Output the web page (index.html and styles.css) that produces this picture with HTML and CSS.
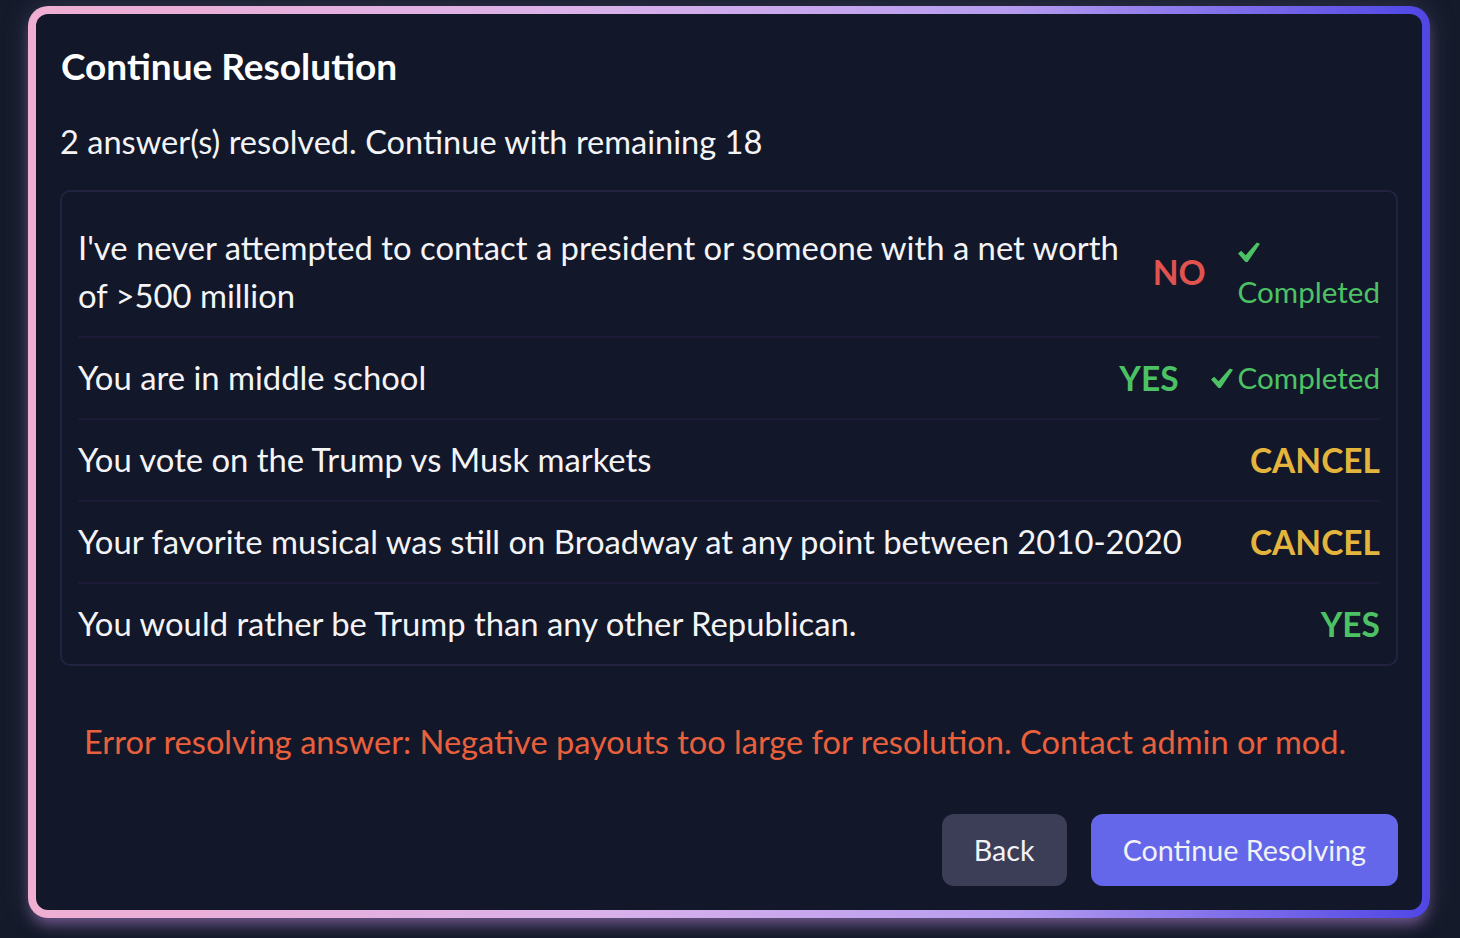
FILE: index.html
```html
<!DOCTYPE html>
<html lang="en">
<head>
<meta charset="utf-8">
<title>Continue Resolution</title>
<link rel="stylesheet" href="styles.css">
</head>
<body>
<div class="modal">
  <h2 class="title">Continue Resolution</h2>
  <p class="subtitle">2 answer(s) resolved. Continue with remaining 18</p>
  <div class="list">
    <div class="row row-tall">
      <div class="text">I've never attempted to contact a president or someone with a net worth of &gt;500 million</div>
      <div class="answer no">NO</div>
      <div class="status stacked"><span class="check"><svg viewBox="0 0 22 20" width="22" height="20" aria-hidden="true"><path d="M0 11.5 L3.2 8.8 L7.6 13.2 L18.8 0.4 L22 1.8 L9.6 20 L7.4 20 Z" fill="currentColor"/></svg></span><span>Completed</span></div>
    </div>
    <div class="row">
      <div class="text">You are in middle school</div>
      <div class="answer yes">YES</div>
      <div class="status"><span class="check"><svg viewBox="0 0 22 20" width="22" height="20" aria-hidden="true"><path d="M0 11.5 L3.2 8.8 L7.6 13.2 L18.8 0.4 L22 1.8 L9.6 20 L7.4 20 Z" fill="currentColor"/></svg></span><span>Completed</span></div>
    </div>
    <div class="row">
      <div class="text">You vote on the Trump vs Musk markets</div>
      <div class="answer cancel">CANCEL</div>
    </div>
    <div class="row">
      <div class="text">Your favorite musical was still on Broadway at any point between 2010-2020</div>
      <div class="answer cancel">CANCEL</div>
    </div>
    <div class="row">
      <div class="text">You would rather be Trump than any other Republican.</div>
      <div class="answer yes">YES</div>
    </div>
  </div>
  <p class="error">Error resolving answer: Negative payouts too large for resolution. Contact admin or mod.</p>
  <div class="actions">
    <button class="btn btn-back">Back</button>
    <button class="btn btn-primary">Continue Resolving</button>
  </div>
</div>
</body>
</html>
```
FILE: styles.css
```css
html, body {
  margin: 0;
  padding: 0;
}
body {
  background: #151a2b;
  width: 1460px;
  height: 938px;
  overflow: hidden;
  font-family: Lato, "Noto Sans", sans-serif;
  color: #f4f4f6;
  padding: 6px 30px 0 28px;
  box-sizing: border-box;
}
.modal {
  box-sizing: border-box;
  width: 1402px;
  height: 912px;
  border: 8px solid transparent;
  border-radius: 20px;
  background:
    linear-gradient(#121729, #121729) padding-box,
    linear-gradient(90deg, #f0aed2 0%, #dab2ea 40%, #b69cf0 70%, #4f46e5 100%) border-box;
  box-shadow: 0 10px 14px -4px rgba(170, 120, 200, 0.55), 0 0 24px rgba(90, 90, 120, 0.45);
  padding: 24px;
  display: flex;
  flex-direction: column;
}
.title {
  margin: 0;
  font-size: 37px;
  font-weight: 700;
  line-height: 56px;
  color: #ffffff;
  padding-left: 1px;
}
.subtitle {
  margin: 24px 0 0 0;
  font-size: 32.6px;
  line-height: 48px;
}
.list {
  margin-top: 24px;
  border: 2px solid #23233f;
  border-radius: 10px;
  padding: 0 16px;
}
.row {
  display: flex;
  align-items: center;
  gap: 32px;
  padding: 16px 0;
  border-bottom: 2px solid #1c1a36;
  font-size: 32.8px;
  line-height: 48px;
}
.row:last-child {
  border-bottom: none;
}
.row-tall {
  padding: 32px 0 16px 0;
}
.text {
  flex: 1 1 auto;
  min-width: 0;
}
.answer {
  flex: 0 0 auto;
  font-weight: 700;
  font-size: 33.5px;
}
.no { color: #e1534f; }
.yes { color: #4cc264; }
.cancel { color: #e4b53d; }
.status {
  flex: 0 0 auto;
  display: flex;
  align-items: center;
  color: #4cc264;
  font-size: 29.6px;
  line-height: 40px;
}
.status.stacked {
  flex-direction: column;
  align-items: flex-start;
}
.check {
  display: flex;
  align-items: center;
  height: 40px;
  margin-right: 5px;
}
.check svg {
  display: block;
}
.stacked .check {
  margin-right: 0;
}
.error {
  margin: 52px 0 0 24px;
  color: #e9603d;
  font-size: 32.6px;
  line-height: 48px;
}
.actions {
  margin-top: auto;
  display: flex;
  justify-content: flex-end;
  gap: 24px;
}
.btn {
  font-family: Lato, "Noto Sans", sans-serif;
  font-size: 28.7px;
  border: none;
  border-radius: 12px;
  height: 72px;
  padding: 0 32px;
  color: #f2f2f6;
  cursor: pointer;
}
.btn-back {
  background: #3c3d57;
}
.btn-primary {
  background: #6467e9;
}
```
